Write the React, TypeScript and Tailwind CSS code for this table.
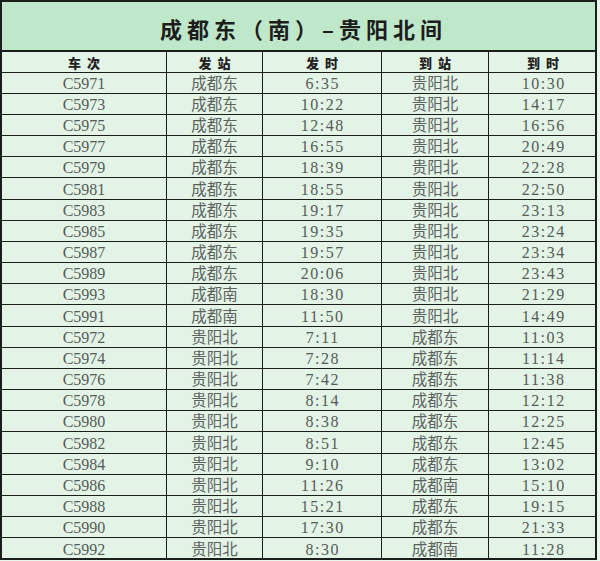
const rows: [string, string, string, string, string][] = [
  ['C5971', '成都东', '6:35', '贵阳北', '10:30'],
  ['C5973', '成都东', '10:22', '贵阳北', '14:17'],
  ['C5975', '成都东', '12:48', '贵阳北', '16:56'],
  ['C5977', '成都东', '16:55', '贵阳北', '20:49'],
  ['C5979', '成都东', '18:39', '贵阳北', '22:28'],
  ['C5981', '成都东', '18:55', '贵阳北', '22:50'],
  ['C5983', '成都东', '19:17', '贵阳北', '23:13'],
  ['C5985', '成都东', '19:35', '贵阳北', '23:24'],
  ['C5987', '成都东', '19:57', '贵阳北', '23:34'],
  ['C5989', '成都东', '20:06', '贵阳北', '23:43'],
  ['C5993', '成都南', '18:30', '贵阳北', '21:29'],
  ['C5991', '成都南', '11:50', '贵阳北', '14:49'],
  ['C5972', '贵阳北', '7:11', '成都东', '11:03'],
  ['C5974', '贵阳北', '7:28', '成都东', '11:14'],
  ['C5976', '贵阳北', '7:42', '成都东', '11:38'],
  ['C5978', '贵阳北', '8:14', '成都东', '12:12'],
  ['C5980', '贵阳北', '8:38', '成都东', '12:25'],
  ['C5982', '贵阳北', '8:51', '成都东', '12:45'],
  ['C5984', '贵阳北', '9:10', '成都东', '13:02'],
  ['C5986', '贵阳北', '11:26', '成都南', '15:10'],
  ['C5988', '贵阳北', '15:21', '成都东', '19:15'],
  ['C5990', '贵阳北', '17:30', '成都东', '21:33'],
  ['C5992', '贵阳北', '8:30', '成都南', '11:28'],
];

const headers = ['车次', '发站', '发时', '到站', '到时'];

const cols = 'grid grid-cols-[165px_96px_119px_107px_108px]';
const cell = 'flex items-center justify-center leading-none border-r border-[#1a1f1b] last:border-r-0';
const cjk = "font-['Noto_Sans_CJK_SC',sans-serif]";
const serif = "font-['Liberation_Serif','Noto_Sans_CJK_SC',serif]";

// rows are about 21.17px apart in the picture; spread the spare pixels
const rowHeight = (i: number) =>
  Math.floor((i + 1) * 21.17) - Math.floor(i * 21.17) === 22 ? 'h-[22px]' : 'h-[21px]';

export default function App() {
  return (
    <div className="w-[600px] h-[561px] bg-[#e9f6ec]">
      <div className="w-[597px] h-[560px] border-2 border-[#1a1f1b] bg-[#e3f4e7]">
        <div
          className={`h-[50px] flex items-center justify-center bg-[#bfe7c9] border-b-2 border-[#1a1f1b] text-[22px] font-bold tracking-[5px] text-[#1d1d1d] pt-1 pl-[10px] ${cjk}`}
        >
          成都东（南）–贵阳北间
        </div>
        <div className={`${cols} h-[21px] border-b border-[#1a1f1b]`}>
          {headers.map((h) => (
            <div key={h} className={`${cell} text-[13px] font-black tracking-[6px] pl-[6px] text-[#222] ${cjk}`}>
              {h}
            </div>
          ))}
        </div>
        {rows.map((r, i) => (
          <div
            key={r[0]}
            className={`${cols} ${rowHeight(i)} ${i < rows.length - 1 ? 'border-b' : ''} border-[#1a1f1b] text-[16px] text-[#555b57]`}
          >
            <div className={`${cell} ${serif} pt-[2px]`}>{r[0]}</div>
            <div className={`${cell} ${cjk} text-[15.5px] text-[#5d625f]`}>{r[1]}</div>
            <div className={`${cell} ${serif} tracking-[1.5px] pl-[1.5px] pt-[2px]`}>{r[2]}</div>
            <div className={`${cell} ${cjk} text-[15.5px] text-[#5d625f]`}>{r[3]}</div>
            <div className={`${cell} ${serif} tracking-[1.5px] pl-[1.5px] pt-[2px]`}>{r[4]}</div>
          </div>
        ))}
      </div>
    </div>
  );
}
